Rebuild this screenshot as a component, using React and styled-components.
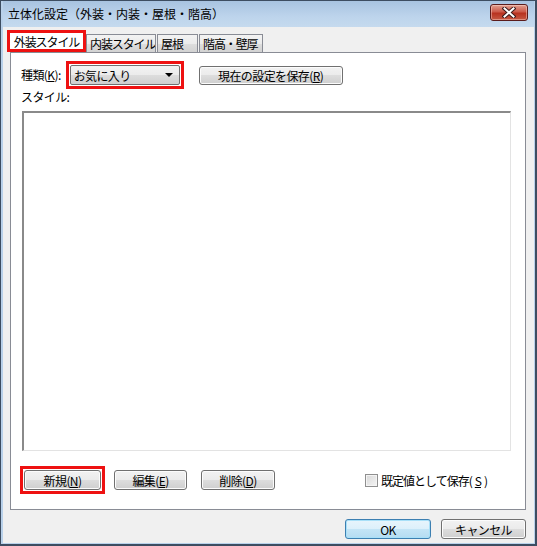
import React from "react";
import styled, { createGlobalStyle } from "styled-components";

const GlobalStyle = createGlobalStyle`
  html, body {
    margin: 0;
    padding: 0;
    background: #ffffff;
  }
  body {
    font-family: "Noto Sans CJK JP", "Noto Sans", sans-serif;
    font-size: 12px;
    color: #000000;
  }
  * {
    box-sizing: border-box;
  }
`;

const Window = styled.div`
  width: 537px;
  height: 546px;
  display: flex;
  flex-direction: column;
  background: #b9d1ea;
  border-style: solid;
  border-color: #3d4d61;
  border-width: 1px 2px 2px 1px;
  padding: 0 1px 1px 2px;
`;

const TitleBar = styled.div`
  height: 26px;
  display: flex;
  align-items: center;
  padding: 0 0 0 5px;
  background: linear-gradient(#a8c3e0, #bdd4ec 60%, #c5daee);
`;

const Title = styled.span`
  font-size: 12px;
  line-height: 14px;
`;

const CloseButton = styled.div`
  margin-left: auto;
  margin-right: 6px;
  margin-top: -4px;
  width: 38px;
  height: 17px;
  border: 1px solid #5b1c1c;
  border-radius: 3px;
  background: linear-gradient(#e2a090, #cc5a4a 45%, #b83220 55%, #c65a45);
  display: flex;
  align-items: center;
  justify-content: center;
  box-shadow: inset 0 0 0 1px rgba(255, 220, 210, 0.45);
`;

const Client = styled.div`
  flex: 1;
  display: flex;
  flex-direction: column;
  background: #f0f0f0;
  padding: 3px 8px 0 7px;
`;

const TabStrip = styled.div`
  height: 22px;
  display: flex;
  align-items: flex-end;
`;

const Tab = styled.div`
  width: ${(p) => p.w}px;
  height: ${(p) => (p.active ? 22 : 18)}px;
  margin-left: ${(p) => (p.active ? -3 : 0)}px;
  margin-right: ${(p) => (p.active ? 0 : 1)}px;
  display: flex;
  align-items: center;
  justify-content: ${(p) => (p.active ? "center" : "flex-start")};
  padding-left: ${(p) => (p.active ? 0 : 3)}px;
  white-space: nowrap;
  overflow: hidden;
  background: ${(p) =>
    p.active ? "#ffffff" : "linear-gradient(#f3f3f3, #ebebeb 50%, #dedede 50%, #d2d2d2)"};
  border: ${(p) => (p.active ? "3px solid #ee1111" : "1px solid #898c95")};
  border-bottom: ${(p) => (p.active ? "3px solid #ee1111" : "none")};
  font-size: 12px;
  letter-spacing: -1.1px;
`;

const Panel = styled.div`
  flex: 1;
  display: flex;
  flex-direction: column;
  background: #ffffff;
  border: 1px solid #898c95;
  padding: 8px 14px 15px 10px;
`;

const Row = styled.div`
  display: flex;
  align-items: center;
`;

const Label = styled.span`
  line-height: 14px;
  white-space: nowrap;
  letter-spacing: -0.6px;
`;

const Mark = styled.span`
  display: inline-flex;
  padding: ${(p) => (p.on ? 1 : 0)}px;
  border: ${(p) => (p.on ? "3px solid #ee1111" : "none")};
  margin-left: ${(p) => p.ml || 0}px;
`;

const Combo = styled.div`
  width: 110px;
  height: 20px;
  border: 1px solid #707070;
  border-radius: 2px;
  background: linear-gradient(#f2f2f2, #ebebeb 50%, #dddddd 50%, #cfcfcf);
  display: flex;
  align-items: center;
  padding: 0 6px 0 3px;
  letter-spacing: -0.6px;
`;

const Arrow = styled.span`
  margin-left: auto;
  width: 0;
  height: 0;
  border-left: 4px solid transparent;
  border-right: 4px solid transparent;
  border-top: 4px solid #000000;
`;

const Button = styled.div`
  width: ${(p) => p.w}px;
  height: ${(p) => p.h || 20}px;
  margin-left: ${(p) => p.ml || 0}px;
  border: 1px solid ${(p) => (p.primary ? "#3c7fb1" : "#707070")};
  border-radius: 3px;
  background: ${(p) =>
    p.primary
      ? "linear-gradient(#e8f5fc, #dcf0fb 50%, #c4e5f6 50%, #b5dcf2)"
      : "linear-gradient(#f2f2f2, #ebebeb 50%, #dddddd 50%, #cfcfcf)"};
  box-shadow: inset 0 0 0 1px ${(p) => (p.primary ? "#a8e0f8" : "#fcfcfc")};
  display: flex;
  align-items: center;
  justify-content: center;
  white-space: nowrap;
  letter-spacing: -0.6px;
`;

const StyleLabel = styled(Label)`
  margin: 1px 0 7px 0;
`;

const ListBox = styled.div`
  flex: 1;
  margin-left: 1px;
  background: #ffffff;
  border-style: solid;
  border-width: 2px 1px 1px 2px;
  border-color: #8a8a8a #e3e3e3 #e3e3e3 #8a8a8a;
`;

const ActionRow = styled(Row)`
  margin-top: 15px;
  padding-right: 24px;
`;

const CheckWrap = styled.label`
  margin-left: auto;
  display: flex;
  align-items: center;
  gap: 3px;
  white-space: nowrap;
  letter-spacing: -1px;
`;

const CheckBox = styled.span`
  width: 13px;
  height: 13px;
  border: 1px solid #8f8f8f;
  background: linear-gradient(135deg, #d8d8d8, #f4f4f4);
  box-shadow: inset 0 0 0 1px #f4f4f4;
`;

const Footer = styled.div`
  height: 33px;
  display: flex;
  justify-content: flex-end;
  align-items: flex-start;
  padding-top: 9px;
`;

function CloseGlyph() {
  return (
    <svg width="14" height="11" viewBox="0 0 14 11">
      <path d="M2.5 1.5 L11.5 9.5 M11.5 1.5 L2.5 9.5" stroke="#3a1a1a" strokeWidth="4" strokeLinecap="square" />
      <path d="M2.5 1.5 L11.5 9.5 M11.5 1.5 L2.5 9.5" stroke="#ffffff" strokeWidth="2" strokeLinecap="square" />
    </svg>
  );
}

export default function App() {
  return (
    <>
      <GlobalStyle />
      <Window>
        <TitleBar>
          <Title>立体化設定（外装・内装・屋根・階高）</Title>
          <CloseButton>
            <CloseGlyph />
          </CloseButton>
        </TitleBar>
        <Client>
          <TabStrip>
            <Tab active w={79}>外装スタイル</Tab>
            <Tab w={70}>内装スタイル</Tab>
            <Tab w={41}>屋根</Tab>
            <Tab w={64}>階高・壁厚</Tab>
          </TabStrip>
          <Panel>
            <Row>
              <Label>種類(<u>K</u>):</Label>
              <Mark on ml={5}>
                <Combo>
                  お気に入り
                  <Arrow />
                </Combo>
              </Mark>
              <Button w={144} h={19} ml={15}>現在の設定を保存(<u>R</u>)</Button>
            </Row>
            <StyleLabel>スタイル:</StyleLabel>
            <ListBox />
            <ActionRow>
              <Mark on ml={-1}>
                <Button w={77}>新規(<u>N</u>)</Button>
              </Mark>
              <Button w={73} ml={9}>編集(<u>E</u>)</Button>
              <Button w={74} ml={14}>削除(<u>D</u>)</Button>
              <CheckWrap>
                <CheckBox />
                既定値として保存(<u>S</u>)
              </CheckWrap>
            </ActionRow>
          </Panel>
          <Footer>
            <Button w={86} primary>OK</Button>
            <Button w={85} ml={10}>キャンセル</Button>
          </Footer>
        </Client>
      </Window>
    </>
  );
}
